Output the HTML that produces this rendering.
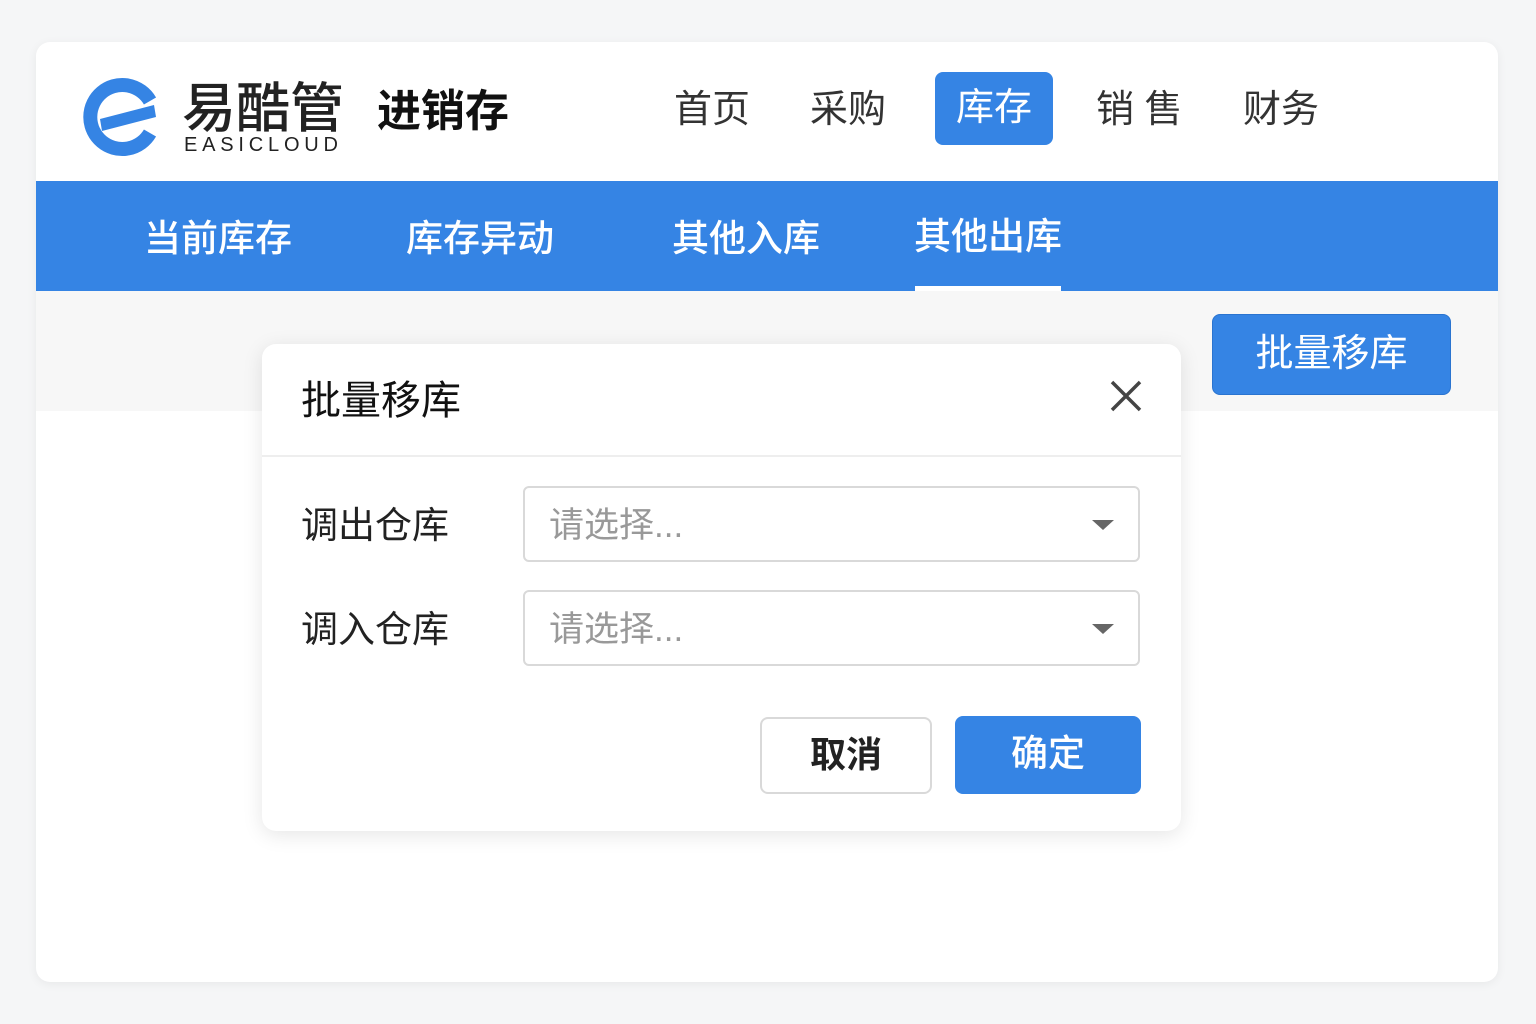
<!DOCTYPE html>
<html><head><meta charset="utf-8"><style>
*{margin:0;padding:0;box-sizing:border-box}
body{width:1536px;height:1024px;background:#f5f6f7;font-family:"Liberation Sans","Noto Sans CJK SC",sans-serif;position:relative;overflow:hidden}
.card{position:absolute;left:36px;top:42px;width:1462px;height:940px;background:#fff;border-radius:14px;box-shadow:0 2px 10px rgba(0,0,0,.06);overflow:hidden}
.abs{position:absolute;white-space:nowrap}
.nav{font-size:38px;color:#333}
.bar{position:absolute;left:0;top:139px;width:1462px;height:110px;background:#3584e4}
.sub{font-size:37px;color:#fff;top:166px;font-weight:500}
.gray{position:absolute;left:0;top:249px;width:1462px;height:120px;background:#f7f7f7}
.btn{position:absolute;border-radius:8px;text-align:center}
.dlg{position:absolute;left:262px;top:344px;width:919px;height:487px;background:#fff;border-radius:14px;box-shadow:0 4px 20px rgba(0,0,0,.1)}
.sel{position:absolute;left:261px;width:617px;height:76px;border:2px solid #d9d9d9;border-radius:6px;font-size:35px;color:#999;padding:9px 24px}
.sel:after{content:"";position:absolute;right:24px;top:32px;border:11px solid transparent;border-top:10px solid #666;border-bottom:0}
.lab{font-size:37px;color:#222;left:39px}
</style></head><body>
<div class="card">
<svg class="abs" style="left:44px;top:35px" width="82" height="80" viewBox="0 0 82 80">
<path d="M70 24 A32 32 0 1 0 70 56" fill="none" stroke="#3584e4" stroke-width="14"/>
<path d="M20 42 L74 28 L76 40 L22 54Z" fill="#3584e4"/>
</svg>
<div class="abs" style="left:146px;top:22px;font-size:54px;color:#222;font-weight:500">易酷管</div>
<div class="abs" style="left:148px;top:92px;font-size:20px;letter-spacing:4.8px;color:#222">EASICLOUD</div>
<div class="abs" style="left:341px;top:33px;font-size:44px;color:#111;font-weight:700">进销存</div>
<div class="abs nav" style="left:638px;top:36px">首页</div>
<div class="abs nav" style="left:774px;top:36px">采购</div>
<div class="btn" style="left:899px;top:30px;width:118px;height:73px;background:#3584e4;color:#fff;font-size:38px;line-height:73px">库存</div>
<div class="abs nav" style="left:1060px;top:36px">销 售</div>
<div class="abs nav" style="left:1207px;top:36px">财务</div>
<div class="bar"></div>
<div class="abs sub" style="left:108px">当前库存</div>
<div class="abs sub" style="left:370px">库存异动</div>
<div class="abs sub" style="left:636px">其他入库</div>
<div class="abs sub" style="left:878px;top:164px">其他出库</div>
<div class="abs" style="left:879px;top:244px;width:146px;height:5px;background:#fff"></div>
<div class="gray"></div>
<div class="btn" style="left:1176px;top:272px;width:239px;height:81px;background:#3584e4;color:#fff;font-size:38px;line-height:78px;border:1px solid #2a74d0">批量移库</div>
</div>
<div class="dlg">
<div class="abs" style="left:39px;top:24px;font-size:40px;color:#111">批量移库</div>
<svg class="abs" style="left:848px;top:36px" width="32" height="32"><path d="M2 2L30 30M30 2L2 30" stroke="#444" stroke-width="3.5"/></svg>
<div class="abs" style="left:0;top:111px;width:919px;height:2px;background:#eee"></div>
<div class="abs lab" style="top:151px">调出仓库</div>
<div class="sel" style="top:142px">请选择...</div>
<div class="abs lab" style="top:255px">调入仓库</div>
<div class="sel" style="top:246px">请选择...</div>
<div class="btn" style="left:498px;top:373px;width:172px;height:77px;border:2px solid #d9d9d9;font-size:36px;line-height:71px;color:#222;font-weight:700">取消</div>
<div class="btn" style="left:693px;top:372px;width:186px;height:78px;background:#3584e4;color:#fff;font-size:37px;line-height:76px;font-weight:500">确定</div>
</div>
</body></html>
